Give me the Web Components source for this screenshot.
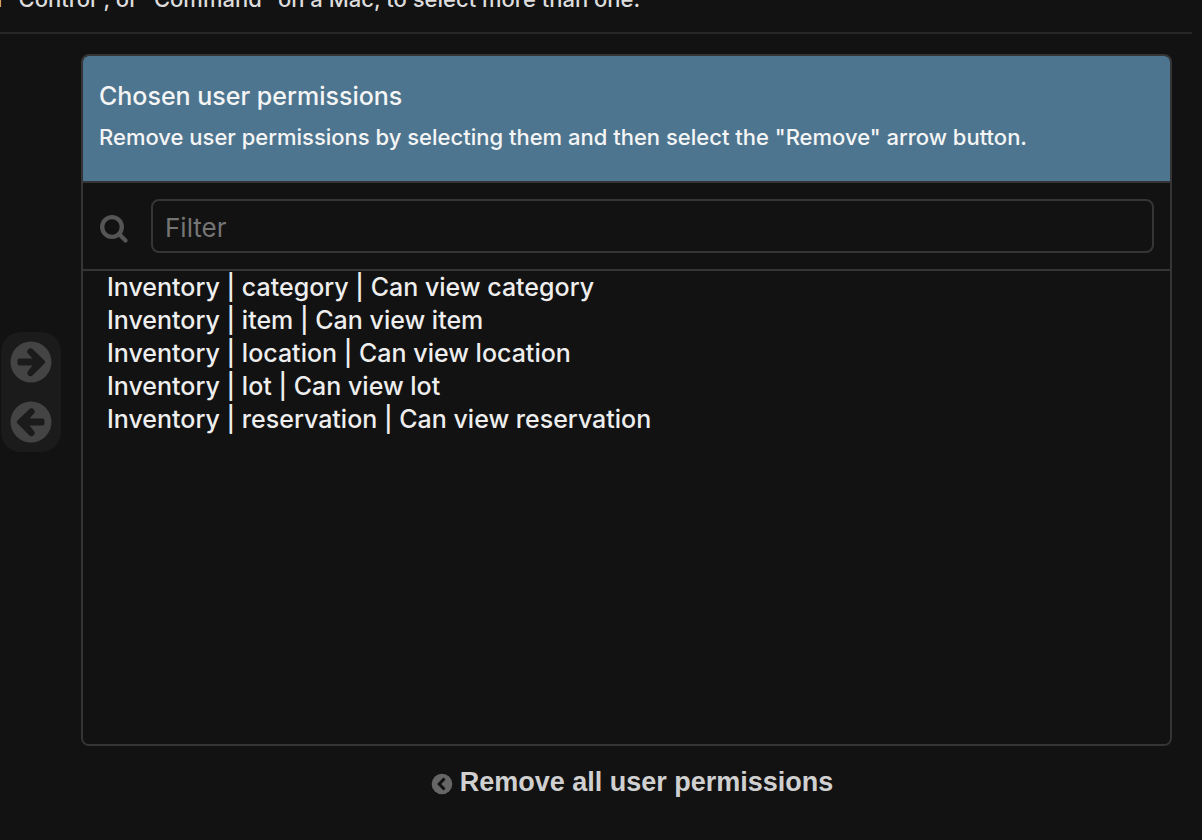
<!DOCTYPE html>
<html lang="en">
<head>
<meta charset="utf-8">
<title>Change user</title>
<style>
:root {
  --bg: #121212;
  --border: #353535;
  --hairline: #272727;
  --primary: #4e758f;
  --fg: #eeeeee;
  --quiet: #d0d0d0;
}
body {
  margin: 0;
  background: var(--bg);
  color: var(--fg);
  font-family: Inter, "Liberation Sans", sans-serif;
  font-weight: 500;
  overflow: hidden;
}
</style>
</head>
<body>
<permission-field>
  <field-help slot="help">n “Control”, or “Command” on a Mac, to select more than one.</field-help>
  <move-chooser></move-chooser>
  <chosen-selector>
    <span slot="title">Chosen user permissions</span>
    <span slot="help">Remove user permissions by selecting them and then select the "Remove" arrow button.</span>
  </chosen-selector>
</permission-field>

<script>
class ShadowElement extends HTMLElement {
  constructor() {
    super();
    this.attachShadow({ mode: "open" }).innerHTML = this.constructor.markup;
  }
}

customElements.define("permission-field", class extends ShadowElement {
  static markup = `
    <style>
      :host { display: block; }
      .help { margin-right: 10px; border-bottom: 2px solid var(--hairline); }
      .row { display: grid; grid-template-columns: 60px minmax(0, 1fr); gap: 20px; padding: 20px 30px 0 1px; }
    </style>
    <div class="help"><slot name="help"></slot></div>
    <div class="row"><slot></slot></div>`;
});

customElements.define("field-help", class extends ShadowElement {
  static markup = `
    <style>
      :host { display: flex; align-items: flex-end; height: 32px; overflow: hidden; }
      p { margin: 0 0 17px -11px; font-size: 22px; line-height: 32px; color: #dcdcdc; white-space: nowrap; }
    </style>
    <p><slot></slot></p>`;
});

customElements.define("move-chooser", class extends ShadowElement {
  static markup = `
    <style>
      :host { display: block; padding-top: 278px; }
      div { display: flex; flex-direction: column; align-items: center; gap: 20px; padding: 10px 0; border-radius: 20px; background: #1b1b1b; }
      button { display: block; width: 40px; height: 40px; padding: 0; border: 0; background: none; color: #444; }
      svg { display: block; overflow: visible; }
    </style>
    <div>
      <button type="button" aria-label="Choose selected user permissions">
        <svg width="40" height="40" viewBox="0 0 40 40"><circle cx="20" cy="20" r="20.5" fill="currentColor"/><path d="M17 7.500q2.500-2.500 5 0L33.500 18.500q1.500 1.500 0 3L22 33q-2.500 2.500-5 0-1.700-2 0-4L21.500 23.500H8.500q-2 0-2-2v-3q0-2 2-2H21.500L17 11.500q-1.700-2 0-4Z" fill="#1b1b1b"/></svg>
      </button>
      <button type="button" aria-label="Remove selected user permissions">
        <svg width="40" height="40" viewBox="0 0 40 40"><circle cx="20" cy="20" r="20.5" fill="currentColor"/><path transform="matrix(-1 0 0 1 40 0)" d="M17 7.500q2.500-2.500 5 0L33.500 18.500q1.500 1.500 0 3L22 33q-2.500 2.500-5 0-1.700-2 0-4L21.500 23.500H8.500q-2 0-2-2v-3q0-2 2-2H21.500L17 11.500q-1.700-2 0-4Z" fill="#1b1b1b"/></svg>
      </button>
    </div>`;
});

customElements.define("filter-bar", class extends ShadowElement {
  static markup = `
    <style>
      :host { display: flex; align-items: center; gap: 22px; padding: 16px; border-bottom: 2px solid var(--border); }
      label { display: block; }
      svg { display: block; overflow: visible; }
      input {
        flex: 1; min-width: 0; box-sizing: border-box; height: 54px; padding: 2px 12px 0;
        border: 2px solid var(--border); border-radius: 8px; outline: 0;
        background: var(--bg); color: var(--fg); font: 26px Inter, "Liberation Sans", sans-serif;
      }
      input::placeholder { color: #757575; opacity: 1; }
    </style>
    <label for="filter" aria-label="Filter chosen user permissions">
      <svg width="30" height="30" viewBox="0 0 30 30" fill="none" stroke="#555" stroke-linecap="round"><circle cx="13" cy="16" r="9.800" stroke-width="4.300"/><path d="M20.500 23.500L26.500 29.500" stroke-width="4.300"/></svg>
    </label>
    <input id="filter" type="text" placeholder="Filter">`;
});

customElements.define("chosen-selector", class extends ShadowElement {
  static markup = `
    <style>
      :host { display: block; }
      .panel { border: 2px solid var(--border); border-radius: 8px; overflow: hidden; }
      header { padding: 24px 16px 27px; background: var(--primary); border-bottom: 2px solid var(--border); color: #f5f5f5; }
      h2 { margin: 0 0 9px; font-size: 25px; line-height: 32px; font-weight: 500; }
      p { margin: 0; font-size: 22px; line-height: 33px; white-space: nowrap; }
      select {
        display: block; width: 100%; height: 473px; margin: 0; padding: 0 16px; border: 0; border-radius: 0; outline: 0;
        background: var(--bg); color: var(--fg); font: 25px Inter, "Liberation Sans", sans-serif; scrollbar-width: none;
      }
      option { box-sizing: border-box; height: 33px; padding: 1px 8px 0; font-weight: 500; }
      footer { display: flex; justify-content: center; padding: 20px 0 20px 12px; }
      button {
        display: flex; align-items: center; gap: 8px; padding: 0; border: 0; background: none;
        color: var(--quiet); font: bold 27px/32px "Liberation Sans", Arial, sans-serif;
      }
      svg { display: block; overflow: visible; }
    </style>
    <div class="panel">
      <header>
        <h2><slot name="title"></slot></h2>
        <p><slot name="help"></slot></p>
      </header>
      <filter-bar></filter-bar>
      <select multiple aria-label="Chosen user permissions">
        <option>Inventory | category | Can view category</option>
        <option>Inventory | item | Can view item</option>
        <option>Inventory | location | Can view location</option>
        <option>Inventory | lot | Can view lot</option>
        <option>Inventory | reservation | Can view reservation</option>
      </select>
    </div>
    <footer>
      <button type="button">
        <svg width="20" height="20" viewBox="0 0 20 20"><circle cx="10" cy="12" r="10.300" fill="#666"/><path d="M12.500 6.500L7.200 12L12.500 17.500" fill="none" stroke="#121212" stroke-width="3"/></svg>
        <span>Remove all user permissions</span>
      </button>
    </footer>`;
});
</script>
</body>
</html>
